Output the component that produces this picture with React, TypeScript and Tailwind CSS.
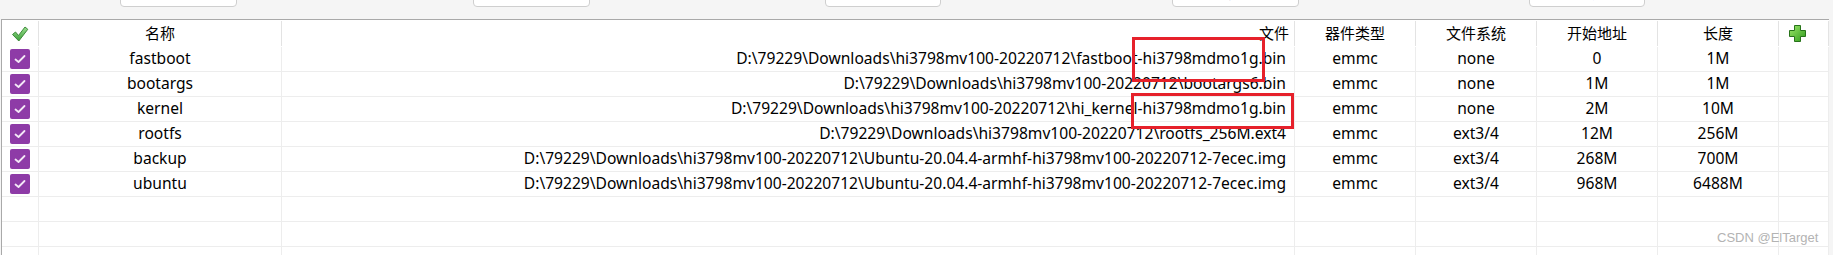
import React from "react";

type TPart = {
  name: string;
  file: string;
  device: string;
  fs: string;
  start: string;
  size: string;
};

const base = "D:\\79229\\Downloads\\hi3798mv100-20220712\\";

const parts: TPart[] = [
  { name: "fastboot", file: base + "fastboot-hi3798mdmo1g.bin", device: "emmc", fs: "none", start: "0", size: "1M" },
  { name: "bootargs", file: base + "bootargs6.bin", device: "emmc", fs: "none", start: "1M", size: "1M" },
  { name: "kernel", file: base + "hi_kernel-hi3798mdmo1g.bin", device: "emmc", fs: "none", start: "2M", size: "10M" },
  { name: "rootfs", file: base + "rootfs_256M.ext4", device: "emmc", fs: "ext3/4", start: "12M", size: "256M" },
  { name: "backup", file: base + "Ubuntu-20.04.4-armhf-hi3798mv100-20220712-7ecec.img", device: "emmc", fs: "ext3/4", start: "268M", size: "700M" },
  { name: "ubuntu", file: base + "Ubuntu-20.04.4-armhf-hi3798mv100-20220712-7ecec.img", device: "emmc", fs: "ext3/4", start: "968M", size: "6488M" },
];

const cols = "grid grid-cols-[37px_243px_1013px_121px_121px_121px_121px_50px]";
const cell = "border-r border-[#ededed] flex items-center justify-center";
const head = "border-r border-[#e3e3e3] my-[1px] flex items-center";
const topBtn = "h-[24px] -mt-[17px] bg-white border border-[#cfcfcf] rounded-b-[4px] text-[15px] leading-[16px] pb-[8px]";

const HeaderCheck = () => (
  <svg width="18" height="18" viewBox="0 0 18 18">
    <defs>
      <linearGradient id="hc" x1="0" y1="0" x2="0" y2="1">
        <stop offset="0" stopColor="#9be08f" />
        <stop offset="1" stopColor="#3c9f3a" />
      </linearGradient>
    </defs>
    <path d="M1.5 9.5 L4.5 7 L7.5 10.5 L14 2 L16.8 4.3 L7.8 16 Z" fill="url(#hc)" stroke="#3d8a3a" strokeWidth="1" strokeLinejoin="round" />
  </svg>
);

const PlusIcon = () => (
  <svg width="17" height="17" viewBox="0 0 17 17">
    <defs>
      <linearGradient id="pl" x1="0" y1="0" x2="1" y2="1">
        <stop offset="0" stopColor="#9ee86b" />
        <stop offset="1" stopColor="#2f9a1c" />
      </linearGradient>
    </defs>
    <path d="M5.5 0.5 H11.5 V5.5 H16.5 V11.5 H11.5 V16.5 H5.5 V11.5 H0.5 V5.5 H5.5 Z" fill="url(#pl)" stroke="#27731a" strokeWidth="1" />
  </svg>
);

const RowCheck = () => (
  <div className="w-[20px] h-[20px] rounded-[2px] bg-[#8e3ba7] flex items-center justify-center">
    <svg width="12" height="10" viewBox="0 0 12 10">
      <path d="M1.5 5.5 L4.5 8 L10.5 2" fill="none" stroke="#f3e9f6" strokeWidth="1.8" strokeLinecap="round" strokeLinejoin="round" />
    </svg>
  </div>
);

const App = () => {
  return (
    <div className="relative w-[1833px] h-[255px] bg-[#f5f5f5] overflow-hidden text-black text-[15.6px] font-['Microsoft_YaHei','Noto_Sans','Noto_Sans_CJK_SC',sans-serif]">
      <div className="h-[19px] flex items-start overflow-hidden">
        <button className={`ml-[120px] w-[117px] ${topBtn}`}>读取</button>
        <button className={`ml-[236px] w-[117px] ${topBtn}`}>烧写全部</button>
        <button className={`ml-[235px] w-[116px] ${topBtn}`}>擦除</button>
        <button className={`ml-[231px] w-[127px] ${topBtn}`}>导入分区表</button>
        <button className={`ml-[230px] w-[116px] ${topBtn}`}>帮助</button>
      </div>
      <div className="ml-[1px] w-[1828px] h-[236px] bg-white border-l border-t border-[#a9a9a9]">
        <div className={`${cols} h-[27px] text-[15px]`}>
          <div className={`${head} justify-center`}><HeaderCheck /></div>
          <div className={`${head} justify-center`}>名称</div>
          <div className={`${head} justify-end pr-[5px]`}>文件</div>
          <div className={`${head} justify-center`}>器件类型</div>
          <div className={`${head} justify-center`}>文件系统</div>
          <div className={`${head} justify-center`}>开始地址</div>
          <div className={`${head} justify-center`}>长度</div>
          <div className={`${head} justify-start pl-[10px]`}><PlusIcon /></div>
        </div>
        {parts.map((p) => (
          <div key={p.name} className={`${cols} h-[25px] border-b border-[#ededed]`}>
            <div className={cell}><RowCheck /></div>
            <div className={cell}>{p.name}</div>
            <div className={`${cell} justify-end pr-[8px] whitespace-nowrap`}>{p.file}</div>
            <div className={cell}>{p.device}</div>
            <div className={cell}>{p.fs}</div>
            <div className={cell}>{p.start}</div>
            <div className={cell}>{p.size}</div>
            <div className={cell}></div>
          </div>
        ))}
        {[0, 1, 2].map((i) => (
          <div key={i} className={`${cols} h-[25px] border-b border-[#ededed]`}>
            {[0, 1, 2, 3, 4, 5, 6, 7].map((c) => (
              <div key={c} className="border-r border-[#ededed]"></div>
            ))}
          </div>
        ))}
      </div>
      <div className="absolute left-[1132px] top-[37px] w-[133px] h-[45px] border-[3px] border-[#e6212b]"></div>
      <div className="absolute left-[1131px] top-[93px] w-[163px] h-[36px] border-[3px] border-[#e6212b]"></div>
      <div className="absolute left-[1717px] top-[230px] text-[13px] leading-[15px] text-[#b3b3b3] font-['Liberation_Sans',sans-serif]">CSDN @ElTarget</div>
    </div>
  );
};

export default App;
